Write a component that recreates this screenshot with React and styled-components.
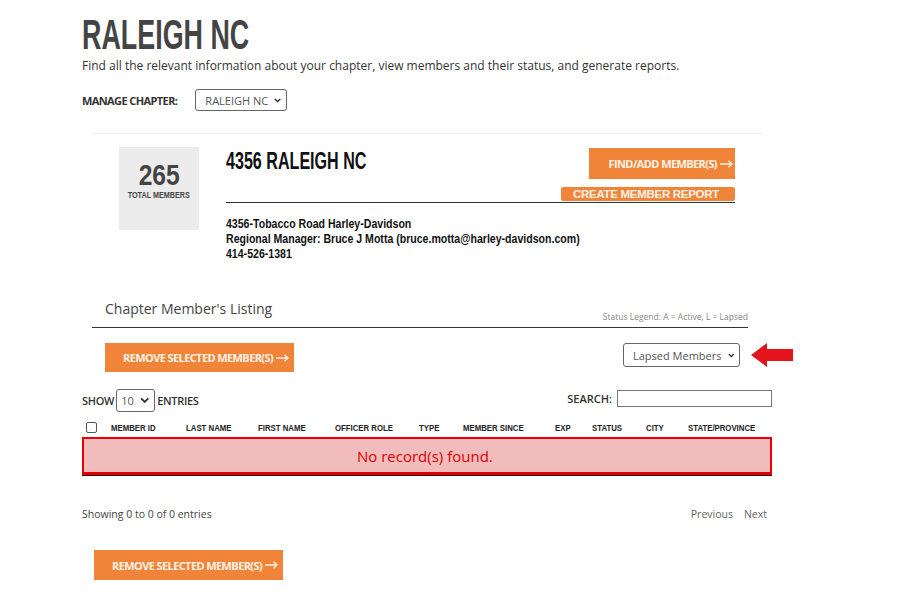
import React from 'react';
import styled, { createGlobalStyle } from 'styled-components';

const GlobalStyle = createGlobalStyle`
  body {
    margin: 0;
    background: #fff;
    font-family: "Open Sans", "Noto Sans", sans-serif;
    color: #333;
  }
`;

const condensed = `"Liberation Sans", Arial, sans-serif`;

// the display face in the screenshot is a narrow one; squeeze a regular bold
const Squeeze = styled.span`
  display: inline-block;
  white-space: nowrap;
  transform: scaleX(${p => p.sx});
  transform-origin: ${p => p.origin || 'left'} center;
`;

const Page = styled.div`
  width: 900px;
  padding: 14px 0 12px 82px;
  box-sizing: border-box;
`;

const Title = styled.h1`
  margin: 0;
  font-family: ${condensed};
  font-weight: 700;
  font-size: 42px;
  line-height: 42px;
  color: #444;
`;

const Intro = styled.p`
  margin: 1px 0 0;
  font-size: 12px;
  color: #333;
`;

const ManageRow = styled.div`
  display: flex;
  align-items: center;
  gap: 18px;
  margin-top: 15px;
  font-size: 11px;
  font-weight: 700;
  color: #333;
  letter-spacing: -0.6px;
`;

const Select = styled.div`
  display: inline-flex;
  align-items: center;
  justify-content: space-between;
  gap: 6px;
  box-sizing: border-box;
  height: ${p => p.h || 22}px;
  width: ${p => p.w}px;
  padding: 0 5px 0 ${p => p.pl || 9}px;
  border: 1px solid #666;
  border-radius: 3px;
  font-size: ${p => p.fs || 11}px;
  font-weight: 400;
  color: #555;
  background: #fff;
  letter-spacing: 0;
  white-space: nowrap;
`;

const Chevron = () => (
  <svg width="10" height="7" viewBox="0 0 10 7">
    <path d="M1.2 1.3 L5 5 L8.8 1.3" stroke="#333" strokeWidth="2" fill="none" />
  </svg>
);

const ArrowRight = () => (
  <svg width="13" height="8" viewBox="0 0 13 8" style={{ marginLeft: 3 }}>
    <path d="M0 4 H12 M8.5 0.7 L12 4 L8.5 7.3" stroke="#fff2e6" strokeWidth="1.3" fill="none" />
  </svg>
);

const Panel = styled.div`
  margin: 22px 0 0 10px;
  width: 670px;
  border-top: 1px solid #eee;
`;

const CardRow = styled.div`
  display: flex;
  padding: 13px 0 0 27px;
`;

const CountBox = styled.div`
  width: 80px;
  height: 83px;
  background: #ececec;
  display: flex;
  flex-direction: column;
  align-items: center;
  padding-top: 13px;
  box-sizing: border-box;
  font-family: ${condensed};
  color: #444;
`;

const Count = styled.div`
  font-size: 29px;
  font-weight: 700;
  line-height: 30px;
`;

const CountLabel = styled.div`
  font-size: 9px;
  font-weight: 700;
`;

const Info = styled.div`
  margin-left: 27px;
  width: 509px;
`;

const InfoHead = styled.div`
  display: flex;
  justify-content: space-between;
  border-bottom: 1px solid #333;
  height: 55px;
`;

const ChapterName = styled.div`
  font-family: ${condensed};
  font-weight: 700;
  font-size: 23px;
  line-height: 26px;
  color: #111;
  margin-top: 1px;
`;

const Actions = styled.div`
  display: flex;
  flex-direction: column;
  align-items: flex-end;
  gap: 8px;
  padding-top: 1px;
`;

const OrangeButton = styled.div`
  display: flex;
  align-items: center;
  justify-content: ${p => p.align || 'flex-end'};
  box-sizing: border-box;
  width: ${p => p.w}px;
  height: ${p => p.h}px;
  padding: 0 ${p => p.pr ?? 4}px 0 ${p => p.pl ?? 0}px;
  background: #f0853a;
  color: #fff2e6;
  font-family: ${p => p.arial ? '"Liberation Sans", Arial, sans-serif' : '"Open Sans", sans-serif'};
  font-weight: 700;
  font-size: ${p => p.fs || 11}px;
  letter-spacing: ${p => p.arial ? '-0.3px' : '-0.6px'};
  border-radius: ${p => p.r || 0}px;
  white-space: nowrap;
`;

const Address = styled.div`
  margin-top: 14px;
  font-family: ${condensed};
  font-weight: 700;
  font-size: 12.5px;
  line-height: 15px;
  color: #111;
`;

const ListingHead = styled.div`
  display: flex;
  justify-content: space-between;
  align-items: flex-end;
  margin: 37px 0 0 0;
  width: 656px;
  border-bottom: 1px solid #333;
  padding: 0 0 5px 13px;
  box-sizing: border-box;
`;

const ListingTitle = styled.div`
  font-size: 14px;
  color: #444;
  padding-bottom: 4px;
`;

const Legend = styled.div`
  font-size: 8.5px;
  color: #888;
`;

const ToolRow = styled.div`
  display: flex;
  justify-content: space-between;
  align-items: flex-start;
  margin-top: 15px;
  padding-left: 23px;
  width: 711px;
  box-sizing: border-box;
`;

const RightTools = styled.div`
  display: flex;
  align-items: center;
  gap: 11px;
`;

const RedArrow = () => (
  <svg width="42" height="24" viewBox="0 0 42 24">
    <path d="M0 12 L16 0 L16 6 L42 6 L42 18 L16 18 L16 24 Z" fill="#e3141b" />
  </svg>
);

const TableWrap = styled.div`
  width: 690px;
  margin-top: 17px;
`;

const FilterRow = styled.div`
  display: flex;
  justify-content: space-between;
  align-items: center;
  font-size: 11px;
  font-weight: 600;
  color: #333;
`;

const Show = styled.div`
  display: flex;
  align-items: center;
  gap: 2px;
  letter-spacing: -0.3px;
`;

const Search = styled.div`
  display: flex;
  align-items: center;
  gap: 5px;
  margin-top: -5px;
`;

const SearchInput = styled.div`
  width: 155px;
  height: 17px;
  border: 1px solid #777;
  box-sizing: border-box;
`;

const HeadRow = styled.div`
  display: grid;
  grid-template-columns: 25px 75px 72px 77px 84px 44px 92px 37px 54px 42px 1fr;
  align-items: center;
  margin-top: 5px;
  height: 20px;
  padding-left: 4px;
  font-family: ${condensed};
  font-weight: 700;
  font-size: 9.5px;
  color: #222;
`;

const Check = styled.div`
  width: 9px;
  height: 9px;
  border: 1px solid #555;
  border-radius: 2px;
  background: #fff;
`;

const Empty = styled.div`
  height: 38px;
  box-sizing: border-box;
  background: #f2bcbc;
  border: 2px solid #e00;
  border-bottom: 3px solid #d00;
  box-shadow: 0 1px 0 #300;
  display: flex;
  align-items: center;
  padding-left: 273px;
  font-size: 15px;
  color: #d00;
`;

const Footer = styled.div`
  display: flex;
  justify-content: space-between;
  align-items: center;
  margin-top: 32px;
  font-size: 10.5px;
  color: #444;
`;

const Pager = styled.div`
  display: flex;
  gap: 11px;
  color: #666;
  padding-right: 5px;
`;

const BottomAction = styled.div`
  margin: 29px 0 0 12px;
`;

const columns = ['MEMBER ID', 'LAST NAME', 'FIRST NAME', 'OFFICER ROLE', 'TYPE', 'MEMBER SINCE', 'EXP', 'STATUS', 'CITY', 'STATE/PROVINCE'];

export default function App() {
  return (
    <>
      <GlobalStyle />
      <Page>
        <Title><Squeeze sx={0.64}>RALEIGH NC</Squeeze></Title>
        <Intro>Find all the relevant information about your chapter, view members and their status, and generate reports.</Intro>
        <ManageRow>
          MANAGE CHAPTER:
          <Select w={92} h={22}>RALEIGH NC <Chevron /></Select>
        </ManageRow>

        <Panel>
          <CardRow>
            <CountBox>
              <Count><Squeeze sx={0.85} origin="center">265</Squeeze></Count>
              <CountLabel><Squeeze sx={0.8} origin="center">TOTAL MEMBERS</Squeeze></CountLabel>
            </CountBox>
            <Info>
              <InfoHead>
                <ChapterName><Squeeze sx={0.7}>4356 RALEIGH NC</Squeeze></ChapterName>
                <Actions>
                  <OrangeButton w={146} h={31} pr={2}>FIND/ADD MEMBER(S)<ArrowRight /></OrangeButton>
                  <OrangeButton w={174} h={14} arial align="center" fs={11.5} r={2}>CREATE MEMBER REPORT</OrangeButton>
                </Actions>
              </InfoHead>
              <Address>
                <div><Squeeze sx={0.845}>4356-Tobacco Road Harley-Davidson</Squeeze></div>
                <div><Squeeze sx={0.845}>Regional Manager: Bruce J Motta (bruce.motta@harley-davidson.com)</Squeeze></div>
                <div><Squeeze sx={0.845}>414-526-1381</Squeeze></div>
              </Address>
            </Info>
          </CardRow>

          <ListingHead>
            <ListingTitle>Chapter Member's Listing</ListingTitle>
            <Legend>Status Legend: A = Active, L = Lapsed</Legend>
          </ListingHead>
        </Panel>

        <ToolRow>
          <OrangeButton w={189} h={29} pl={18} pr={0} align="flex-start">REMOVE SELECTED MEMBER(S)<ArrowRight /></OrangeButton>
          <RightTools>
            <Select w={117} h={24} fs={11} pl={9}>Lapsed Members <Chevron /></Select>
            <RedArrow />
          </RightTools>
        </ToolRow>

        <TableWrap>
          <FilterRow>
            <Show>
              SHOW
              <Select w={39} h={23} pl={4}>10 <Chevron /></Select>
              ENTRIES
            </Show>
            <Search>
              SEARCH:
              <SearchInput />
            </Search>
          </FilterRow>
          <HeadRow>
            <Check />
            {columns.map(c => (
              <span key={c}><Squeeze sx={0.82}>{c}</Squeeze></span>
            ))}
          </HeadRow>
          <Empty>No record(s) found.</Empty>
          <Footer>
            <span>Showing 0 to 0 of 0 entries</span>
            <Pager>
              <span>Previous</span>
              <span>Next</span>
            </Pager>
          </Footer>
        </TableWrap>

        <BottomAction>
          <OrangeButton w={189} h={30} pl={18} pr={0} align="flex-start">REMOVE SELECTED MEMBER(S)<ArrowRight /></OrangeButton>
        </BottomAction>
      </Page>
    </>
  );
}
